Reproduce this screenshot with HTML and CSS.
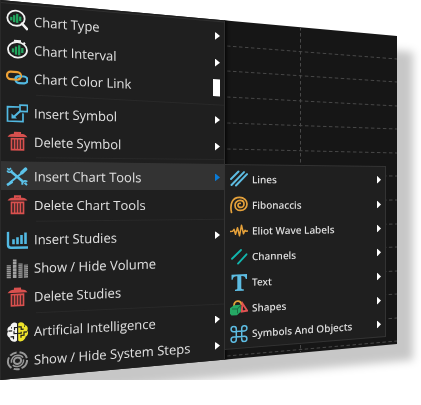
FILE: index.html
```html
<!DOCTYPE html>
<html lang="en">
<head>
<meta charset="utf-8">
<title>Chart menu</title>
<link rel="stylesheet" href="styles.css">
</head>
<body>
<svg class="defs" aria-hidden="true">
  <symbol id="trash" viewBox="0 0 22 22">
    <g fill="none" stroke="#d9504e" stroke-width="1.7">
      <path d="M3.500 5.600C5 4 7 4 11.500 4S18 4 19.500 5.600zM8.800 3.800V2.200h5.400v1.600"/>
      <path d="M5.500 8.300h12v11h-12z"/><path d="M8.600 8.500v10.500M11.500 8.500v10.500M14.400 8.500v10.500"/>
    </g>
  </symbol>
</svg>
<main class="stage">
  <div class="panel">
    <svg class="grid" viewBox="0 0 397 380" preserveAspectRatio="none" aria-hidden="true">
      <g fill="none" stroke="#484848" stroke-dasharray="3.500 2.500">
        <path d="M227 46L397 59M227 71L397 82M227 97L397 106M227 123L397 129M227 149L397 153M227 175L397 176M227 201L397 200M227 227L397 224M227 253L397 247M227 279L397 271M227 305L397 294M227 331L397 318M227 356L397 341"/>
        <path d="M300.500 27V352"/>
      </g>
    </svg>
    <nav class="menu" aria-label="Chart">
      <button class="item tilt-a"><svg class="icon" viewBox="0 0 22 22"><ellipse cx="10" cy="9" rx="8.700" ry="7.500" fill="none" stroke="#f2f2f2" stroke-width="1.800"/><path d="M16 14l5 5" stroke="#f2f2f2" stroke-width="2.600" stroke-linecap="round"/><path d="M5.300 8v3.500M8.200 6v7M11.200 4.500v9M14.200 7v4.500" stroke="#22a55e" stroke-width="2.300"/></svg><span class="label">Chart Type</span><i class="arrow"></i></button>
      <button class="item tilt-b"><svg class="icon" viewBox="0 0 22 22"><ellipse cx="11.500" cy="11.700" rx="9.500" ry="7.800" fill="none" stroke="#f2f2f2" stroke-width="1.800"/><path d="M8 2.800h7M11.500 2.500v2M17.500 4l1.500 1.500" stroke="#f2f2f2" stroke-width="2"/><path d="M7 10.500v4M10 8.500v8M13.200 7v10M16.300 9.500v5" stroke="#22a55e" stroke-width="2.300"/></svg><span class="label">Chart Interval</span><i class="arrow"></i></button>
      <button class="item tilt-c"><svg class="icon" viewBox="0 0 22 22"><g fill="none" stroke-width="2.200"><rect x="9.500" y="9.300" width="12" height="6.800" rx="3.400" stroke="#52b9e2"/><rect x="1" y="5.200" width="14" height="7.500" rx="3.700" stroke="#eda136"/><path d="M9.500 12.500c0-2 1.500-3.200 3.500-3.200h2" stroke="#52b9e2"/></g></svg><span class="label">Chart Color Link</span><i class="swatch"></i></button>
      <hr class="rule tilt-c">
      <button class="item tilt-d"><svg class="icon" viewBox="0 0 22 22"><g fill="none" stroke="#52b9e2" stroke-width="1.700"><path d="M13.500 5.300H1.500v14.500h15.500V11.500"/><path d="M14 3.300h7.500v6.400H14z"/><path d="M14 9.500l-6 5.800" stroke-width="2"/></g><path d="M5.500 12l5.500 5H5.500z" fill="#52b9e2"/></svg><span class="label">Insert Symbol</span><i class="arrow"></i></button>
      <button class="item tilt-e"><svg class="icon"><use href="#trash"/></svg><span class="label">Delete Symbol</span><i class="arrow"></i></button>
      <hr class="rule tilt-f">
      <button class="item active tilt-f" aria-haspopup="true" aria-expanded="true"><svg class="icon" viewBox="0 0 22 22"><g fill="none" stroke="#5cc3ea"><path d="M4.500 6l12 10" stroke-width="2.600"/><path d="M17.500 6.500L4 17.500" stroke-width="2"/><path d="M19.500 4l-3.500 3.300" stroke-width="3.600" stroke-linecap="round"/><path d="M1 20l5.500-3.500" stroke-width="2.600"/><path d="M1.300 3.200l1.700 1.600 2-1.800M1 5.500c1.500 2.500 4 2.500 5-.8" stroke-width="1.500"/><path d="M16.500 19.500c-1-3 2-5 4.800-3M18.500 17.500l2.500 2.300" stroke-width="1.900"/></g></svg><span class="label">Insert Chart Tools</span><i class="arrow"></i></button>
      <button class="item"><svg class="icon"><use href="#trash"/></svg><span class="label">Delete Chart Tools</span></button>
      <hr class="rule tilt-g">
      <button class="item tilt-h"><svg class="icon" viewBox="0 0 22 22"><path d="M2 3v13c0 2 .5 3 3 3h17" fill="none" stroke="#52b9e2" stroke-width="2.400"/><path d="M7.500 10.500v5M11.500 8.500v7M15.500 6.500v9M19.500 4v11.500" stroke="#52b9e2" stroke-width="2.600"/></svg><span class="label">Insert Studies</span><i class="arrow"></i></button>
      <button class="item tilt-i"><svg class="icon" viewBox="0 0 22 22"><g stroke="#999" stroke-width="4.200" stroke-dasharray="1.500 .5"><path d="M2.800 20.500V7.500"/><path d="M14.500 20.500V6"/><path d="M20 20.500V7.500"/></g><path d="M8.700 20.500V2" stroke="#a2a2a2" stroke-width="3.600" stroke-dasharray="3 .4"/></svg><span class="label">Show / Hide Volume</span></button>
      <button class="item tilt-j"><svg class="icon"><use href="#trash"/></svg><span class="label">Delete Studies</span></button>
      <hr class="rule tilt-j">
      <button class="item tilt-k"><svg class="icon" viewBox="0 0 22 22"><path d="M11 2.500C8-.2 4.500 3 4.500 4.500 1.500 5 .8 8.500 2 10c-2 3 0 5.500 1.500 6C4 20 9 22 11 19.500z" fill="#f4f4f4"/><path d="M12.200 2.500c3-2.700 6.500.5 6.500 2 3 .5 3.700 4 2.500 5.500 2 3 0 5.500-1.500 6-.5 4-5.500 6-7.500 3.500z" fill="#efe42b"/><path d="M11 6.500H8.500V9M2.500 9.500h3.700M11 12.500H8V10M4.500 15.500h3V18M5 6.500h1M12.200 6h3v2.500h2.500M12.200 12.500h3V11M21 11.500h-3v3h-3V17M18 5.500h1" fill="none" stroke="#1e1e1e" stroke-width="1.200"/></svg><span class="label">Artificial Intelligence</span><i class="arrow"></i></button>
      <button class="item tilt-l"><svg class="icon" viewBox="0 0 22 22"><g fill="none" stroke="#989898"><ellipse cx="11.500" cy="11" rx="3.600" ry="3.200" stroke-width="2"/><path d="M5.500 12.500c-.8-4.500 2.500-7 6-7 2.500 0 4.500 1 5.500 2.800M17.500 10c.7 4-2.500 6.800-6 6.800-2 0-3.500-.6-4.700-1.800" stroke-width="1.500"/><ellipse cx="11.500" cy="11" rx="9.600" ry="8.500" stroke-width="2" stroke-dasharray="10 2 6 2.500 12 2 7 3"/></g></svg><span class="label">Show / Hide System Steps</span><i class="arrow"></i></button>
    </nav>
    <nav class="submenu" aria-label="Insert Chart Tools">
      <button class="item small tilt-m"><svg class="icon" viewBox="0 0 18 18"><path d="M1 10L8.500 2.500M1.500 16L14 3M6 16.500L17 5" transform="translate(0 -1)" fill="none" stroke="#5dbce2" stroke-width="2" stroke-linecap="round"/></svg><span class="label">Lines</span><i class="arrow"></i></button>
      <button class="item small tilt-n"><svg class="icon" viewBox="0 0 18 18"><path d="M1.500 16.500C-.5 7 3 1.500 9.500 1.500c4.500 0 7.500 3 7.500 6.500 0 4-3 6.500-6.500 6.500S5 12 5 9.200s2.200-4.700 5-4.700 4 1.700 4 3.600-1.500 3.400-3.300 3.400S8 10.500 8 9.200s1-2 2.200-1.800" fill="none" stroke="#e5a13a" stroke-width="1.700" stroke-linecap="round"/></svg><span class="label">Fibonaccis</span><i class="arrow"></i></button>
      <button class="item small tilt-o"><svg class="icon" viewBox="0 0 18 18"><path d="M0 9.500h2.500L4 7.500l1.500 5L7.500 6l2 8 2-10.500L13.500 12l1.500-3.500 1 1h2" fill="none" stroke="#e5a13a" stroke-width="1.500" stroke-linejoin="round"/></svg><span class="label">Eliot Wave Labels</span><i class="arrow"></i></button>
      <button class="item small tilt-p"><svg class="icon" viewBox="0 0 18 18"><path d="M2 11L11 2.500M8 16l8.500-9" fill="none" stroke="#12b5ad" stroke-width="1.900" stroke-linecap="round"/></svg><span class="label">Channels</span><i class="arrow"></i></button>
      <button class="item small tilt-q"><svg class="icon" viewBox="0 0 18 18"><path d="M1.500 1h15.500v5h-1.200c-.5-2.500-1.300-3.300-4.500-3.300V15c0 .8.700 1 2.500 1.100V17.500H5v-1.400c1.700-.1 2.300-.3 2.300-1.100V2.700C4 2.700 3.200 3.500 2.700 6H1.500z" fill="#5dbce2"/></svg><span class="label">Text</span><i class="arrow"></i></button>
      <button class="item small tilt-r"><svg class="icon" viewBox="0 0 18 18"><path d="M4 6.500C4 .5 11.500.5 11.500 6" fill="none" stroke="#e5a13a" stroke-width="1.800"/><path d="M12.500 4.500L17.200 12l-5.500.5z" fill="none" stroke="#e05252" stroke-width="1.900"/><path d="M0 8.500l4-2.800h6.500L11 12.500l-4 3.500H1.500L0 14z" fill="#25a964"/><path d="M2 9.500h5.500v4.500M7.500 9.500L10 7" fill="none" stroke="#1b6f45"/></svg><span class="label">Shapes</span><i class="arrow"></i></button>
      <button class="item small tilt-s"><svg class="icon" viewBox="0 0 18 18"><path d="M6.300 6.300h5.400v5.400H6.300zM6.300 6.300H3.700a2.600 2.600 0 1 1 2.600-2.600zM11.700 6.300V3.700a2.600 2.600 0 1 1 2.600 2.600zM11.700 11.700h2.600a2.600 2.600 0 1 1-2.600 2.600zM6.300 11.700v2.600a2.600 2.600 0 1 1-2.600-2.600z" fill="none" stroke="#5dbce2" stroke-width="1.500"/></svg><span class="label">Symbols And Objects</span><i class="arrow"></i></button>
    </nav>
  </div>
</main>
</body>
</html>
```
FILE: styles.css
```css
* { box-sizing: border-box; }

body {
  margin: 0;
  background: #fff;
  font-family: "Open Sans", "Noto Sans", sans-serif;
}

.defs { position: absolute; width: 0; height: 0; }

.stage {
  padding-right: 24px;
  filter: drop-shadow(16px 16px 4px rgba(0, 0, 0, 0.22));
}

.panel {
  position: relative;
  display: flex;
  background: #161616;
  clip-path: polygon(0 0, 100% 36px, 100% calc(100% - 36px), 0 100%);
}

.grid { position: absolute; inset: 0; width: 100%; height: 100%; }

.menu {
  position: relative;
  flex: 0 0 225px;
  padding: 4px 0;
  background: #1f1f1f;
  border-right: 1px solid #303030;
  border-left: 1px solid #2a2a2a;
  box-shadow: 2px 0 3px #080808;
}

.menu::before {
  content: "";
  position: absolute;
  inset: 2px 0 auto;
  border-top: 1px solid #303030;
  transform: skewY(5deg);
  transform-origin: left;
}

.item {
  display: flex;
  align-items: center;
  gap: 6px;
  width: 100%;
  height: 29px;
  padding: 0 4px 0 5px;
  border: 0;
  background: none;
  color: #e0e0e0;
  font: inherit;
  font-size: 13px;
  line-height: 16px;
  text-align: left;
  white-space: nowrap;
  transform-origin: left;
}

.icon { flex: none; width: 22px; height: 22px; }
.label { flex: 1; }

.arrow {
  width: 5px;
  height: 8px;
  background: #fff;
  clip-path: polygon(0 0, 100% 50%, 0 100%);
}

.swatch { width: 7px; height: 17px; background: #fff; }

.active {
  background: #333;
  clip-path: polygon(0 0, 100% 1px, 100% calc(100% - 2px), 0 100%);
}

.active .arrow { background: #0a7bd6; }

.rule {
  height: 1px;
  margin: 2px 0 3px 35px;
  border: 0;
  background: #292929;
  transform-origin: -35px 0;
}

.submenu {
  position: absolute;
  top: 164px;
  left: 224px;
  right: 11px;
  padding: 2px 0;
  background: #333;
  clip-path: polygon(0 0, 100% 2px, 100% calc(100% - 13px), 0 100%);
}

.submenu::before {
  content: "";
  position: absolute;
  inset: 1px;
  background: #1f1f1f;
  clip-path: polygon(0 0, 100% 2px, 100% calc(100% - 13px), 0 100%);
}

.small {
  gap: 4px;
  height: 26px;
  padding: 0 5px 0 6px;
  font-family: "Noto Sans", "Open Sans", sans-serif;
  font-size: 10px;
  font-weight: 500;
}

.small .icon { width: 18px; height: 18px; }
.small .arrow { width: 4px; }

/* Each row leans towards the shared vanishing point. */
.tilt-a { transform: skewY(4.6deg); }
.tilt-b { transform: skewY(4deg); }
.tilt-c { transform: skewY(3deg); }
.tilt-d { transform: skewY(2.2deg); }
.tilt-e { transform: skewY(1.6deg); }
.tilt-f { transform: skewY(0.5deg); }
.tilt-g { transform: skewY(-0.6deg); }
.tilt-h { transform: skewY(-1.2deg); }
.tilt-i { transform: skewY(-2deg); }
.tilt-j { transform: skewY(-2.7deg); }
.tilt-k { transform: skewY(-3.5deg); }
.tilt-l { transform: skewY(-4.2deg); }
.tilt-m { transform: skewY(0.3deg); }
.tilt-n { transform: skewY(-0.2deg); }
.tilt-o { transform: skewY(-0.9deg); }
.tilt-p { transform: skewY(-1.7deg); }
.tilt-q { transform: skewY(-2.4deg); }
.tilt-r { transform: skewY(-3.1deg); }
.tilt-s { transform: skewY(-3.9deg); }
```
